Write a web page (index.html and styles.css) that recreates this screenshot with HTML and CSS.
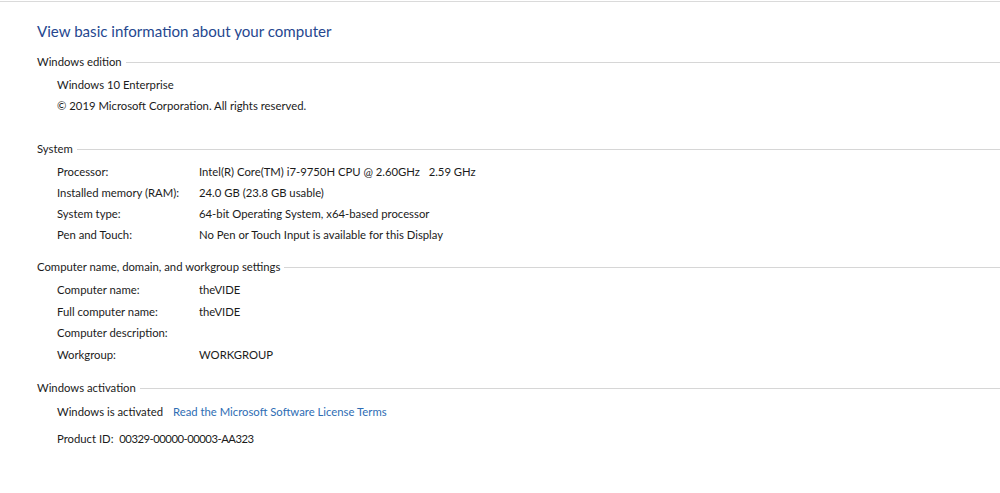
FILE: index.html
```html
<!DOCTYPE html>
<html lang="en">
<head>
<meta charset="utf-8">
<title>System</title>
<link rel="stylesheet" href="styles.css">
</head>
<body>
<div class="page">
  <h1 class="title">View basic information about your computer</h1>

  <section class="group group-edition">
    <div class="group-head"><span class="group-label">Windows edition</span><span class="rule"></span></div>
    <div class="plain">Windows 10 Enterprise</div>
    <div class="plain">© 2019 Microsoft Corporation. All rights reserved.</div>
  </section>

  <section class="group">
    <div class="group-head"><span class="group-label">System</span><span class="rule"></span></div>
    <div class="row"><span class="key">Processor:</span><span class="val">Intel(R) Core(TM) i7-9750H CPU @ 2.60GHz&nbsp;&nbsp; 2.59 GHz</span></div>
    <div class="row"><span class="key">Installed memory (RAM):</span><span class="val">24.0 GB (23.8 GB usable)</span></div>
    <div class="row"><span class="key">System type:</span><span class="val">64-bit Operating System, x64-based processor</span></div>
    <div class="row"><span class="key">Pen and Touch:</span><span class="val">No Pen or Touch Input is available for this Display</span></div>
  </section>

  <section class="group group-name">
    <div class="group-head"><span class="group-label">Computer name, domain, and workgroup settings</span><span class="rule"></span></div>
    <div class="row"><span class="key">Computer name:</span><span class="val">theVIDE</span></div>
    <div class="row"><span class="key">Full computer name:</span><span class="val">theVIDE</span></div>
    <div class="row"><span class="key">Computer description:</span><span class="val"></span></div>
    <div class="row"><span class="key">Workgroup:</span><span class="val">WORKGROUP</span></div>
  </section>

  <section class="group group-activation">
    <div class="group-head"><span class="group-label">Windows activation</span><span class="rule"></span></div>
    <div class="plain">Windows is activated<a class="link" href="#">Read the Microsoft Software License Terms</a></div>
    <div class="plain product">Product ID:&nbsp; <span class="num">00329-00000-00003-AA323</span></div>
  </section>
</div>
</body>
</html>
```

FILE: styles.css
```css
html, body {
  margin: 0;
  padding: 0;
  background: #ffffff;
}

body {
  font-family: "Segoe UI", Lato, "Noto Sans", sans-serif;
  font-size: 11.3px;
  color: #1b1b1b;
}

.page {
  margin-top: 1px;
  border-top: 1px solid #dadada;
  padding: 19px 0 0 37px;
}

.title {
  margin: 0;
  font-size: 15.1px;
  font-weight: normal;
  line-height: 20px;
  color: #26478f;
}

.group {
  margin-top: 10px;
}

.group-edition {
  padding-bottom: 12px;
}

.group-head {
  display: flex;
  align-items: center;
  height: 20px;
  margin-bottom: 3px;
}

.group-label {
  white-space: nowrap;
  padding-right: 4px;
}

.rule {
  flex: 1;
  height: 1px;
  margin-top: 2px;
  background: #d6d6d6;
}

.plain,
.row {
  padding-left: 20px;
  line-height: 21px;
  height: 21px;
  white-space: nowrap;
}

.row {
  display: flex;
}

.group-name {
  margin-top: 11px;
}

.group-name .row {
  line-height: 21.7px;
  height: 21.7px;
}

.group-activation {
  margin-top: 12px;
}

.key {
  width: 142px;
  flex: none;
}

.link {
  margin-left: 10px;
  color: #2e6db4;
  text-decoration: none;
}

.product {
  margin-top: 6px;
}

.num {
  letter-spacing: -0.5px;
}
```
